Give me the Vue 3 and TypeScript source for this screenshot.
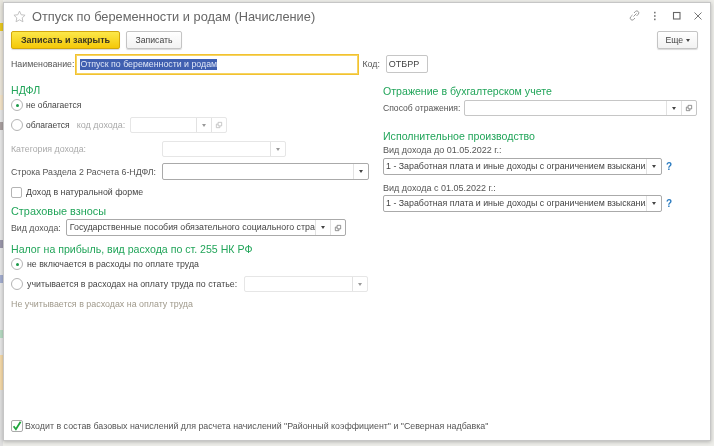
<script setup lang="ts">
const incomeOptions = [
  { label: 'Вид дохода до 01.05.2022 г.:' },
  { label: 'Вид дохода с 01.05.2022 г.:' },
]
</script>

<template>
  <div class="page">
    <div class="win">
      <header class="title">
        <svg class="star" width="13" height="13" viewBox="0 0 14 14"><path d="M7 1.2l1.8 3.9 4.2.5-3.1 2.9.8 4.2L7 10.6l-3.7 2.1.8-4.2L1 5.6l4.2-.5z" fill="none" stroke="#bdbdbd" stroke-width="1"/></svg>
        <h1>Отпуск по беременности и родам (Начисление)</h1>
        <div class="tools">
          <svg width="13" height="13" viewBox="0 0 13 13" fill="none" stroke="#999" stroke-width="1"><path d="M5.5 7.5l3-3M4.5 6L2.6 7.9a2 2 0 0 0 2.8 2.8L7 9M8.5 7l1.9-1.9a2 2 0 0 0-2.8-2.8L6 4"/></svg>
          <svg width="12" height="12" viewBox="0 0 12 12" fill="#777"><rect x="5" y="1.8" width="1.6" height="1.6"/><rect x="5" y="5.2" width="1.6" height="1.6"/><rect x="5" y="8.6" width="1.6" height="1.6"/></svg>
          <svg width="12" height="12" viewBox="0 0 12 12" fill="none" stroke="#666" stroke-width="1.1"><rect x="2.5" y="2.5" width="6.5" height="6.5"/></svg>
          <svg width="12" height="12" viewBox="0 0 12 12" fill="none" stroke="#777" stroke-width="1"><path d="M2.5 2.5l7 7M9.5 2.5l-7 7"/></svg>
        </div>
      </header>

      <div class="toolbar">
        <button class="btn primary">Записать и закрыть</button>
        <button class="btn">Записать</button>
        <button class="btn more">Еще <i class="caret"></i></button>
      </div>

      <div class="name-row">
        <span class="lbl">Наименование:</span>
        <div class="field name"><span class="sel">Отпуск по беременности и родам</span></div>
        <span class="lbl code-lbl">Код:</span>
        <div class="field code">ОТБРР</div>
      </div>

      <div class="cols">
        <section class="left">
          <h2>НДФЛ</h2>
          <label class="opt r1"><i class="radio on"></i>не облагается</label>
          <div class="row r2">
            <label class="opt"><i class="radio"></i>облагается</label>
            <span class="lbl off code-inc">код дохода:</span>
            <div class="field f-income disabled">
              <span class="grow"></span><span class="cell"><i class="caret"></i></span>
              <span class="cell"><svg class="open" viewBox="0 0 9 9"><path d="M3.5 1.5h4v4h-4zM3.5 3.5h-2v4h4v-2"/></svg></span>
            </div>
          </div>
          <div class="row r3">
            <span class="lbl off w-cat">Категория дохода:</span>
            <div class="field f-cat disabled"><span class="grow"></span><span class="cell"><i class="caret"></i></span></div>
          </div>
          <div class="row r4">
            <span class="lbl w-cat">Строка Раздела 2 Расчета 6-НДФЛ:</span>
            <div class="field f-line"><span class="grow"></span><span class="cell"><i class="caret"></i></span></div>
          </div>
          <label class="opt r5"><i class="check"></i>Доход в натуральной форме</label>

          <h2 class="h-ins">Страховые взносы</h2>
          <div class="row r6">
            <span class="lbl">Вид дохода:</span>
            <div class="field f-kind">
              <span class="grow txt">Государственные пособия обязательного социального страхования</span>
              <span class="cell"><i class="caret"></i></span>
              <span class="cell"><svg class="open" viewBox="0 0 9 9"><path d="M3.5 1.5h4v4h-4zM3.5 3.5h-2v4h4v-2"/></svg></span>
            </div>
          </div>

          <h2 class="h-tax">Налог на прибыль, вид расхода по ст. 255 НК РФ</h2>
          <label class="opt r7"><i class="radio on"></i>не включается в расходы по оплате труда</label>
          <div class="row r8">
            <label class="opt"><i class="radio"></i>учитывается в расходах на оплату труда по статье:</label>
            <div class="field f-art disabled"><span class="grow"></span><span class="cell"><i class="caret"></i></span></div>
          </div>
          <p class="note">Не учитывается в расходах на оплату труда</p>
        </section>

        <section class="right">
          <h2>Отражение в бухгалтерском учете</h2>
          <div class="row r9">
            <span class="lbl way-lbl">Способ отражения:</span>
            <div class="field f-way">
              <span class="grow"></span><span class="cell"><i class="caret"></i></span>
              <span class="cell"><svg class="open" viewBox="0 0 9 9"><path d="M3.5 1.5h4v4h-4zM3.5 3.5h-2v4h4v-2"/></svg></span>
            </div>
          </div>
          <h2 class="h-exec">Исполнительное производство</h2>
          <div v-for="o in incomeOptions" :key="o.label" class="stack">
            <span class="lbl exec-lbl">{{ o.label }}</span>
            <div class="row">
              <div class="field f-exec">
                <span class="grow txt">1 - Заработная плата и иные доходы с ограничением взыскания</span>
                <span class="cell"><i class="caret"></i></span>
              </div>
              <span class="help">?</span>
            </div>
          </div>
        </section>
      </div>

      <label class="opt footer">
        <svg class="tick" width="12" height="12" viewBox="0 0 12 12"><rect x=".5" y=".5" width="11" height="11" rx="1.5" fill="#fff" stroke="#aaa"/><path d="M2.6 6.2l2.3 3L9.6 1.8" fill="none" stroke="#1fa53c" stroke-width="1.8"/></svg>
        Входит в состав базовых начислений для расчета начислений "Районный коэффициент" и "Северная надбавка"
      </label>
    </div>
  </div>
</template>

<style>
html, body { margin: 0; background: #f0efec; }
</style>

<style scoped>
.page {
  width: 714px; height: 446px; overflow: hidden; padding: 2px 3px 5px 3px; box-sizing: border-box;
  background-color: #eeeeea;
  background-image: linear-gradient(to bottom, #e8e6de 23px, #e8c820 23px, #e8c820 31px, #ebe6da 31px, #ebe6da 95px, #f4e4c8 95px, #f4e4c8 110px, #e8e8e8 110px, #e8e8e8 122px, #a9a0a0 122px, #a9a0a0 130px, #e8e8e8 130px, #e8e8e8 240px, #9c98ac 240px, #9c98ac 248px, #e8e8e8 248px, #e8e8e8 275px, #a4aed0 275px, #a4aed0 283px, #e8e8e8 283px, #e8e8e8 330px, #b8dcc4 330px, #b8dcc4 338px, #e8e8e8 338px, #e8e8e8 355px, #f5d9a8 355px, #f5d9a8 390px, #e0e0e0 390px);
  background-size: 3px 100%;
  background-repeat: no-repeat;
}
.win { position: relative; height: 439px; box-sizing: border-box; background: #fff; border: 1px solid #c6c6c6; box-shadow: 0 1px 4px rgba(0,0,0,.25); padding: 0 7px; display: flex; flex-direction: column; font: 8.8px "Liberation Sans", Arial, sans-serif; color: #444; filter: blur(.45px); }
.title { display: flex; align-items: center; height: 25px; padding: 1px 0 0 2px; box-sizing: border-box; }
.star { margin-right: 6px; }
h1 { margin: 0; font-size: 12.8px; font-weight: 400; color: #666; flex: 1; }
.tools { display: flex; gap: 10px; align-items: center; margin-top: -1px; margin-right: -1px; }
.tools svg:first-child { margin-right: -2px; }
.tools svg:last-child { margin-left: -1px; }
.toolbar { display: flex; gap: 6px; margin-top: 3px; height: 18px; }
.btn { height: 18px; padding: 0; border: 1px solid #c4c4c4; border-radius: 2px; background: linear-gradient(#fff, #f2f2f2); box-shadow: 0 1px 1px rgba(0,0,0,.15); font: 8.7px "Liberation Sans", Arial, sans-serif; color: #444; width: 56px; }
.btn.primary { width: 109px; background: linear-gradient(#fce84a, #f4c808); border-color: #d3a80c; font-weight: 700; font-size: 9px; color: #3a3520; }
.btn.more { width: 41px; margin-left: auto; margin-right: 5px; }
.caret { display: inline-block; width: 0; height: 0; border: 2px solid transparent; border-top: 3px solid #444; border-bottom: 0; vertical-align: middle; }
.name-row { display: flex; align-items: center; margin-top: 4px; height: 22px; }
.lbl { color: #555; white-space: nowrap; }
.off { color: #aaa; }
.field { display: flex; align-items: stretch; height: 16px; box-sizing: border-box; background: #fff; border: 1px solid #c6c6c6; border-radius: 2px; color: #444; }
.field.disabled { border-color: #e6e6e6; }
.name { width: 284px; height: 21px; margin-left: 1px; align-items: center; border: 1px solid #f2c230; border-radius: 0; padding-left: 4px; box-shadow: inset 0 0 0 1px #f6d462; }
.sel { background: #3f5fb0; color: #dfe6f6; font-size: 8.8px; line-height: 11px; }
.code-lbl { margin-left: 3px; }
.code { width: 42px; height: 18px; margin-left: 6px; align-items: center; padding-left: 2px; font-size: 9px; }
.cols { display: flex; margin-top: 9px; }
.left { width: 372px; flex: none; }
.right { flex: 1; }
h2 { margin: 0; font-size: 10.6px; line-height: 13px; font-weight: 400; color: #22a55a; }
.row { display: flex; align-items: center; }
.opt { display: flex; align-items: center; gap: 4px; color: #444; white-space: nowrap; }
.radio { width: 10px; height: 10px; border: 1px solid #b4b4b4; border-radius: 50%; background: #fff; position: relative; flex: none; }
.radio.on::after { content: ""; position: absolute; left: 3.5px; top: 3.5px; width: 3px; height: 3px; border-radius: 50%; background: #1b9a4a; }
.check { width: 9px; height: 9px; border: 1px solid #b4b4b4; border-radius: 2px; flex: none; }
.grow { flex: 1; min-width: 0; }
.txt { padding-left: 3px; line-height: 14px; white-space: nowrap; overflow: hidden; font-size: 8.85px; }
.f-exec .txt { padding-left: 2px; }
.cell { width: 14px; display: flex; align-items: center; justify-content: center; border-left: 1px solid #e2e2e2; flex: none; }
.open { width: 8px; height: 8px; fill: none; stroke: #777; stroke-width: .9; }
.disabled .caret { border-top-color: #999; }
.disabled .open { stroke: #bbb; }
.r1 { margin-top: 2px; height: 12px; gap: 3px; font-size: 8.5px; }
.r2 { margin-top: 6px; height: 16px; }
.r2 .opt { gap: 3px; font-size: 8.5px; }
.code-inc { margin-left: 7px; font-size: 9px; }
.f-income { width: 97px; margin-left: 5px; }
.r3 { margin-top: 8px; height: 16px; }
.w-cat { width: 151px; }
.f-cat { width: 124px; }
.r4 { margin-top: 6px; height: 17px; }
.f-line { width: 207px; height: 17px; border-color: #aaa; }
.r5 { margin-top: 6px; height: 12px; }
.h-ins { margin-top: 7px; font-size: 10.9px; }
.r6 { margin-top: 1px; height: 17px; gap: 5px; }
.f-kind { width: 280px; height: 17px; border-color: #aaa; }
.h-tax { margin-top: 7px; }
.r7 { margin-top: 2px; height: 12px; }
.r8 { margin-top: 6px; height: 16px; }
.f-art { width: 124px; margin-left: 7px; }
.note { margin: 7px 0 0; color: #a09a8c; font-size: 8.9px; }
.right h2 { margin-top: 1px; }
.r9 { margin-top: 2px; gap: 4px; }
.way-lbl { font-size: 8.6px; }
.f-way { width: 233px; }
.right .h-exec { margin-top: 14px; }
.exec-lbl { font-size: 9px; }
.stack { display: flex; flex-direction: column; margin-top: 2px; gap: 3px; }
.stack + .stack { margin-top: 8px; gap: 2px; }
.f-exec { width: 279px; height: 17px; border-color: #aaa; }
.help { margin-left: 4px; color: #2a7bc0; font-weight: 700; font-size: 10px; }
.footer { position: absolute; left: 7px; top: 417px; gap: 2px; color: #555; font-size: 8.85px; }
</style>
